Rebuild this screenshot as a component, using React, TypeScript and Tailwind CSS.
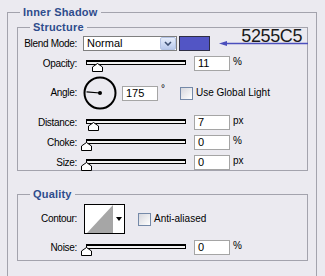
import type { ReactNode } from "react";

const Label = ({ children }: { children: ReactNode }) => (
  <div className="w-[59px] shrink-0 text-right text-[10px] leading-[12px] tracking-[-0.3px] text-black">{children}</div>
);

const Group = ({ title, className, children }: { title: string; className: string; children: ReactNode }) => (
  <fieldset className={`border border-[#a3a3ad] ${className}`}>
    <legend className="ml-[12px] px-[3px] text-[11px] font-bold leading-[14px] tracking-[0.2px] text-[#2e4c8c]">{title}</legend>
    {children}
  </fieldset>
);

const Slider = ({ value }: { value: number }) => (
  <div className="relative ml-[9px] h-[15px] w-[100px] shrink-0">
    <div className="mt-[4px] h-[5px] border border-t-2 border-black bg-[#f2f2f2]" />
    <svg className="absolute top-[7px]" style={{ left: value - 5 }} width="11" height="9" viewBox="0 0 11 9">
      <path d="M0.5 8.5V4L5.5 0.5L10.5 4V8.5Z" fill="#fff" stroke="#000" />
    </svg>
  </div>
);

const NumBox = ({ value, unit, gap = "ml-[8px]" }: { value: string; unit?: string; gap?: string }) => (
  <>
    <div className={`${gap} flex h-[15px] w-[36px] shrink-0 items-center border border-[#a5a5a5] bg-white pl-[3px] text-[11px] text-black`}>
      {value}
    </div>
    {unit && <span className="ml-[3px] self-start text-[10px] leading-[12px] text-black">{unit}</span>}
  </>
);

const Checkbox = () => (
  <div className="h-[13px] w-[13px] shrink-0 border border-[#7489a8] bg-linear-to-br from-[#d6d7dd] to-white" />
);

const SliderRow = ({ label, value, unit, className }: { label: string; value: number; unit: string; className: string }) => (
  <div className={`flex h-[15px] items-center ${className}`}>
    <Label>{label}</Label>
    <Slider value={value} />
    <NumBox value={String(value)} unit={unit} />
  </div>
);

export default function App() {
  return (
    <div className="h-[276px] w-[325px] overflow-hidden bg-[#ebeaf0] font-['Liberation_Sans',Arial,sans-serif]">
      <Group title="Inner Shadow" className="ml-[7px] mt-[5px] w-[310px] pb-[40px]">
        <Group title="Structure" className="ml-[9px] mt-[1px] w-[291px]">
          <div className="relative mt-[2px] flex h-[15px] items-center">
            <Label>Blend Mode:</Label>
            <div className="ml-[6px] flex h-[15px] w-[94px] items-center border border-[#7f7f7f] bg-white pl-[3px] text-[11px] text-black">
              <span className="flex-1">Normal</span>
              <span className="flex h-[13px] w-[16px] items-center justify-center rounded-[2px] border border-[#b4c3e4] bg-linear-to-b from-[#e6edfb] to-[#b9c9ec]">
                <svg width="8" height="5" viewBox="0 0 8 5">
                  <path d="M1 1L4 4L7 1" fill="none" stroke="#3d4f72" strokeWidth="1.6" />
                </svg>
              </span>
            </div>
            <div className="ml-[2px] h-[15px] w-[31px] border border-[#2f2f45] bg-[#5255C5]" />
            <span className="absolute right-[5px] top-[-9px] text-[18px] leading-[18px] tracking-[-0.4px] text-[#1a1a1a]">5255C5</span>
            <svg className="absolute left-[201px] top-[4px]" width="89" height="7" viewBox="0 0 89 7">
              <line x1="4" y1="3.5" x2="89" y2="3.5" stroke="#4b4fbd" strokeWidth="1.4" />
              <path d="M0 3.5L8 1V6Z" fill="#4b4fbd" />
            </svg>
          </div>

          <SliderRow label="Opacity:" value={11} unit="%" className="mt-[5px]" />

          <div className="mt-[5px] flex h-[34px] items-center">
            <Label>Angle:</Label>
            <svg className="ml-[6px] shrink-0" width="34" height="34" viewBox="0 0 34 34">
              <circle cx="17" cy="17" r="15.5" fill="none" stroke="#000" strokeWidth="2" />
              <line x1="17" y1="17" x2="3.5" y2="15.8" stroke="#000" strokeWidth="1.2" />
              <circle cx="17" cy="17" r="2" fill="#000" />
            </svg>
            <NumBox value="175" gap="ml-[5px]" />
            <span className="ml-[3px] mt-[7px] self-start text-[10px] leading-[12px]">°</span>
            <div className="ml-[15px] flex items-center gap-[3px]">
              <Checkbox />
              <span className="text-[10px] leading-[12px] text-black">Use Global Light</span>
            </div>
          </div>

          <SliderRow label="Distance:" value={7} unit="px" className="mt-[5px]" />
          <SliderRow label="Choke:" value={0} unit="%" className="mt-[5px]" />
          <SliderRow label="Size:" value={0} unit="px" className="mt-[5px]" />
        </Group>

        <Group title="Quality" className="ml-[9px] mt-[16px] w-[291px] pb-[5px]">
          <div className="mt-[3px] flex h-[30px] items-center">
            <Label>Contour:</Label>
            <div className="ml-[7px] flex h-[30px] w-[41px] border border-black bg-white">
              <svg width="28" height="28" viewBox="0 0 28 28">
                <polygon points="2,28 28,0 28,28" fill="#a6a6a6" />
              </svg>
              <div className="flex flex-1 items-center justify-center">
                <div className="h-0 w-0 border-x-[3px] border-t-[4px] border-x-transparent border-t-black" />
              </div>
            </div>
            <div className="ml-[13px] flex items-center gap-[3px]">
              <Checkbox />
              <span className="text-[10px] leading-[12px] text-black">Anti-aliased</span>
            </div>
          </div>
          <SliderRow label="Noise:" value={0} unit="%" className="mt-[6px]" />
        </Group>
      </Group>
    </div>
  );
}
